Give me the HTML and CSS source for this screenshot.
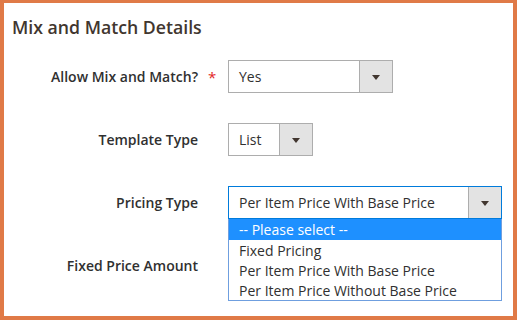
FILE: index.html
```html
<!DOCTYPE html>
<html>
<head>
    <title>Mix and Match Details</title>
    <link rel="stylesheet" href="styles.css">
</head>
<body>
    <div class="panel">
        <h2 class="title">Mix and Match Details</h2>

        <div class="field">
            <label class="label">Allow Mix and Match?</label>
            <span class="req">*</span>
            <div class="select w-yes">
                <span class="value">Yes</span>
                <span class="arrow"></span>
            </div>
        </div>

        <div class="field">
            <label class="label">Template Type</label>
            <span class="req"></span>
            <div class="select w-list">
                <span class="value">List</span>
                <span class="arrow"></span>
            </div>
        </div>

        <div class="field">
            <label class="label">Pricing Type</label>
            <span class="req"></span>
            <div class="control">
                <div class="select w-price focused">
                    <span class="value">Per Item Price With Base Price</span>
                    <span class="arrow"></span>
                </div>
                <ul class="dropdown">
                    <li class="active">-- Please select --</li>
                    <li>Fixed Pricing</li>
                    <li>Per Item Price With Base Price</li>
                    <li>Per Item Price Without Base Price</li>
                </ul>
            </div>
        </div>

        <div class="field">
            <label class="label">Fixed Price Amount</label>
            <span class="req"></span>
            <div class="input w-price"></div>
        </div>
    </div>
</body>
</html>
```

FILE: styles.css
```css
body {
    margin: 0;
    font-family: "Open Sans", "DejaVu Sans", sans-serif;
    background: #ffffff;
}
.panel {
    box-sizing: border-box;
    width: 517px;
    height: 320px;
    border: 4px solid #e07a47; /* orange frame */
    border-top-width: 3px;
    background: #ffffff;
    overflow: hidden;
}
.title {
    margin: 12px 0 21px 8px;
    font-size: 17.7px;
    line-height: 24px;
    font-weight: 600;
    color: #41362f;
}
.field {
    display: grid;
    grid-template-columns: 194px 30px auto;
    align-items: center;
    height: 33px;
    margin-bottom: 30px;
}
.label {
    text-align: right;
    font-size: 14px;
    font-weight: 600;
    color: #303030;
}
.req {
    padding-left: 10px;
    color: #e22626;
    font-size: 15px;
}
.control {
    position: relative;
}
.select {
    box-sizing: border-box;
    display: flex;
    height: 33px;
    border: 1px solid #adadad;
    background: #ffffff;
    font-size: 14px;
    color: #303030;
}
.select.focused {
    border-color: #007bdb;
}
.value {
    flex: 1;
    display: flex;
    align-items: center;
    padding-left: 10px;
    white-space: nowrap;
}
.arrow {
    position: relative;
    width: 32px;
    border-left: 1px solid #adadad;
    background: #e3e3e3;
}
.arrow::after {
    content: "";
    position: absolute;
    left: 12px;
    top: 14px;
    border-left: 4px solid transparent;
    border-right: 4px solid transparent;
    border-top: 5px solid #41362f;
}
.w-yes {
    width: 165px;
}
.w-list {
    width: 85px;
}
.w-price {
    width: 274px;
}
.input {
    box-sizing: border-box;
    height: 33px;
    border: 1px solid #adadad;
}
.dropdown {
    position: absolute;
    top: 33px;
    left: 0;
    z-index: 2;
    box-sizing: border-box;
    width: 274px;
    margin: 0;
    padding: 0;
    list-style: none;
    background: #ffffff;
    border: 1px solid #6f9fdf;
    border-top: none;
    font-size: 14px;
    color: #303030;
}
.dropdown li {
    height: 20px;
    line-height: 21px;
    padding-left: 10px;
}
.dropdown li.active {
    height: 21px;
    line-height: 21px;
    background: #1e90ff;
    color: #ffffff;
}
```
